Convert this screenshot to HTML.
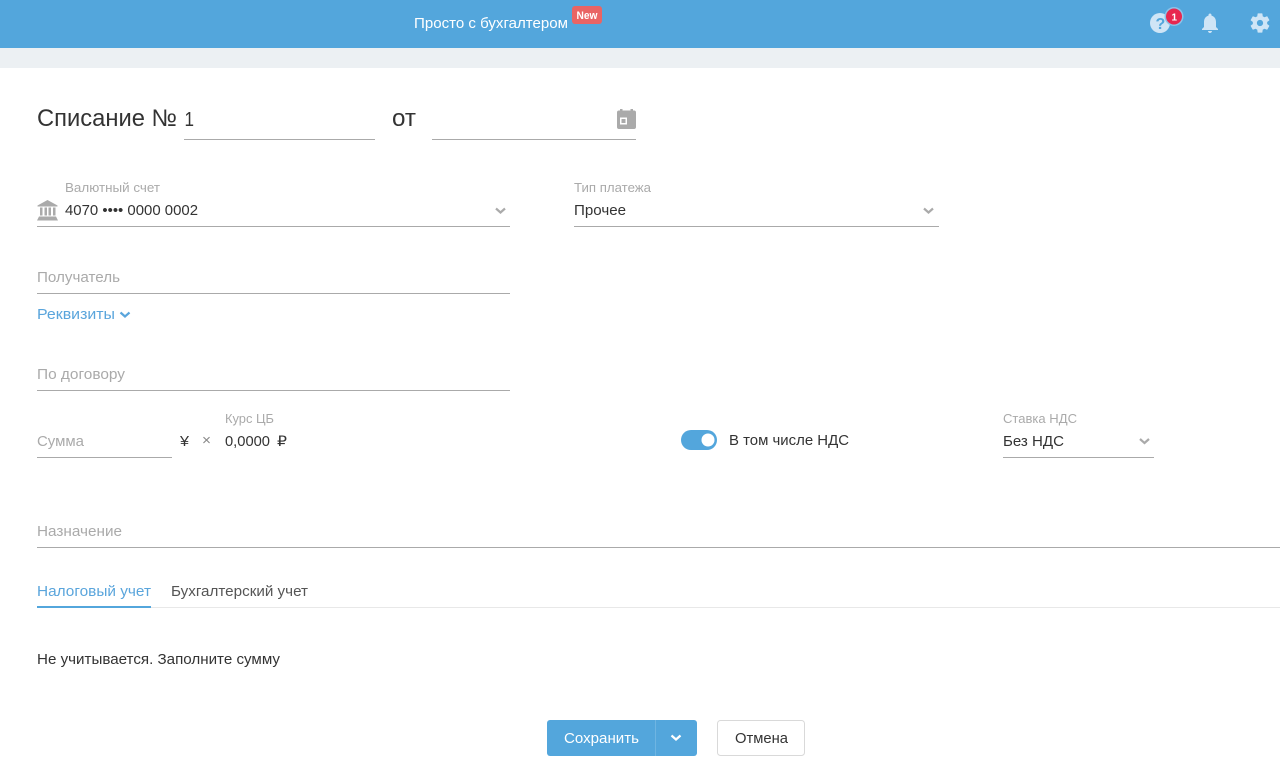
<!DOCTYPE html>
<html lang="ru"><head><meta charset="utf-8"><title>Списание</title>
<style>
html,body{margin:0;padding:0;background:#fff;width:1280px;height:764px;overflow:hidden}
svg{display:block}
text{font-family:"Liberation Sans",sans-serif;font-size:15px;fill:#333;}
.l{font-size:12.5px;fill:#aaa}
.p{fill:#aaa}
.v{fill:#333}
</style></head><body>
<svg width="1280" height="764" viewBox="0 0 1280 764" xmlns="http://www.w3.org/2000/svg">
<rect width="1280" height="48" fill="#53a6dc"/>
<rect y="48" width="1280" height="20" fill="#ecf0f3"/>
<text x="414" y="28" style="fill:#fff" textLength="154" lengthAdjust="spacingAndGlyphs">Просто с бухгалтером</text>
<rect x="572" y="6" width="30" height="18" rx="3" fill="#e96464"/>
<text x="576.500" y="19" style="fill:#fff;font-size:11px;font-weight:bold" textLength="21" lengthAdjust="spacingAndGlyphs">New</text>

<circle cx="1160" cy="23" r="10" fill="#cfe5f6"/>
<text x="1155.500" y="29" style="fill:#53a6dc;font-size:16px;font-weight:bold">?</text>
<circle cx="1174" cy="16.500" r="9.500" fill="#8cc3e8"/>
<circle cx="1174" cy="16.500" r="8" fill="#e8274f"/>
<text x="1171.500" y="20.500" style="fill:#fff;font-size:10px;font-weight:bold">1</text>
<path transform="translate(1198 11)" fill="#cfe5f6" d="M12 22c1.100 0 2-.9 2-2h-4c0 1.100.9 2 2 2zm6-6v-5c0-3.070-1.630-5.640-4.500-6.320V4c0-.83-.67-1.500-1.500-1.500s-1.500.67-1.500 1.500v.68C7.640 5.360 6 7.920 6 11v5l-2 2v1h16v-1l-2-2z"/>
<path transform="translate(1248 11)" fill="#cfe5f6" d="M19.140 12.940c.04-.3.06-.61.06-.94 0-.32-.02-.64-.07-.94l2.030-1.580c.18-.14.23-.41.12-.61l-1.920-3.320c-.12-.22-.37-.29-.59-.22l-2.390.96c-.5-.38-1.030-.7-1.620-.94l-.36-2.540c-.04-.24-.24-.41-.48-.41h-3.840c-.24 0-.43.17-.47.41l-.36 2.540c-.59.24-1.130.57-1.620.94l-2.390-.96c-.22-.08-.47 0-.59.22L2.740 8.870c-.12.21-.08.47.12.61l2.030 1.580c-.05.3-.09.63-.09.94s.02.64.07.94l-2.030 1.580c-.18.14-.23.41-.12.61l1.920 3.320c.12.22.37.29.59.22l2.390-.96c.5.38 1.030.7 1.620.94l.36 2.540c.05.24.24.41.48.41h3.840c.24 0 .44-.17.47-.41l.36-2.540c.59-.24 1.130-.56 1.620-.94l2.390.96c.22.08.47 0 .59-.22l1.920-3.320c.12-.22.07-.47-.12-.61l-2.010-1.580zM12 15.100c-1.700 0-3.100-1.400-3.100-3.100s1.400-3.100 3.100-3.100 3.100 1.400 3.100 3.100-1.400 3.100-3.100 3.100z"/>

<text x="37" y="126" style="font-size:24px" textLength="140" lengthAdjust="spacingAndGlyphs">Списание №</text>
<text x="184.500" y="126" style="font-size:20px" textLength="9.500" lengthAdjust="spacingAndGlyphs">1</text>
<text x="392" y="126" style="font-size:24px" textLength="24" lengthAdjust="spacingAndGlyphs">от</text>

<rect x="620" y="109" width="2.500" height="3" fill="#aaa"/>
<rect x="630.500" y="109" width="2.500" height="3" fill="#aaa"/>
<rect x="617" y="110.500" width="19" height="18.500" rx="2" fill="#aaa"/>
<rect x="620" y="117.500" width="7" height="7" fill="#fff"/>
<rect x="621.500" y="119" width="4" height="4" fill="#aaa"/>

<g fill="#aaa">
<rect x="184" y="139" width="191" height="1"/>
<rect x="432" y="139" width="204" height="1"/>
<rect x="37" y="226" width="473" height="1"/>
<rect x="574" y="226" width="365" height="1"/>
<rect x="37" y="293" width="473" height="1"/>
<rect x="37" y="390" width="473" height="1"/>
<rect x="37" y="457" width="135" height="1"/>
<rect x="1003" y="457" width="151" height="1"/>
<rect x="37" y="547" width="1243" height="1"/>
</g>

<path fill="#aaa" d="M47.500 200L57.500 205.500V206.500H37.500V205.500zM40 207.500h2.500v8H40zM44.500 207.500h2.500v8h-2.500zM48.500 207.500h2.500v8h-2.500zM53 207.500h2.500v8H53zM39 216.500h17L58 220.500H37z"/>
<text class="l" x="65" y="192" textLength="95" lengthAdjust="spacingAndGlyphs">Валютный счет</text>
<text x="65" y="215" textLength="133" lengthAdjust="spacingAndGlyphs">4070 •••• 0000 0002</text>
<path d="M496 208.500l4.500 4 4.500-4" fill="none" stroke="#aaa" stroke-width="2.200"/>
<text class="l" x="574" y="192" textLength="77" lengthAdjust="spacingAndGlyphs">Тип платежа</text>
<text x="574" y="215" textLength="52" lengthAdjust="spacingAndGlyphs">Прочее</text>
<path d="M924 208.500l4.500 4 4.500-4" fill="none" stroke="#aaa" stroke-width="2.200"/>

<text class="p" x="37" y="282" textLength="83" lengthAdjust="spacingAndGlyphs">Получатель</text>
<text x="37" y="319" style="fill:#5aa5dc" textLength="78" lengthAdjust="spacingAndGlyphs">Реквизиты</text>
<path d="M120.500 312.500l4.500 4 4.500-4" fill="none" stroke="#5aa5dc" stroke-width="2.200"/>
<text class="p" x="37" y="379" textLength="88" lengthAdjust="spacingAndGlyphs">По договору</text>

<text class="p" x="37" y="446" textLength="47" lengthAdjust="spacingAndGlyphs">Сумма</text>
<text x="180" y="446" textLength="9" lengthAdjust="spacingAndGlyphs">¥</text>
<text x="202" y="445" style="fill:#888" textLength="9" lengthAdjust="spacingAndGlyphs">×</text>
<text class="l" x="225" y="423" textLength="49" lengthAdjust="spacingAndGlyphs">Курс ЦБ</text>
<text x="225" y="446" textLength="45" lengthAdjust="spacingAndGlyphs">0,0000</text>
<text x="277" y="446" style="font-family:'DejaVu Sans',sans-serif;font-size:14px" textLength="10" lengthAdjust="spacingAndGlyphs">₽</text>

<rect x="681" y="430" width="36" height="20" rx="10" fill="#53a6dc"/>
<circle cx="708" cy="440" r="6.500" fill="#fff"/>
<text x="729" y="445" textLength="120" lengthAdjust="spacingAndGlyphs">В том числе НДС</text>

<text class="l" x="1003" y="423" textLength="74" lengthAdjust="spacingAndGlyphs">Ставка НДС</text>
<text x="1003" y="446" textLength="61" lengthAdjust="spacingAndGlyphs">Без НДС</text>
<path d="M1140 439l4.500 4 4.500-4" fill="none" stroke="#aaa" stroke-width="2.200"/>

<text class="p" x="37" y="536" textLength="85" lengthAdjust="spacingAndGlyphs">Назначение</text>

<rect x="37" y="607" width="1243" height="1" fill="#e8e8e8"/>
<rect x="37" y="606" width="114" height="2" fill="#53a6dc"/>
<text x="37" y="596" style="fill:#5aa5dc" textLength="114" lengthAdjust="spacingAndGlyphs">Налоговый учет</text>
<text x="171" y="596" style="fill:#555" textLength="137" lengthAdjust="spacingAndGlyphs">Бухгалтерский учет</text>

<text x="37" y="664" textLength="243" lengthAdjust="spacingAndGlyphs">Не учитывается. Заполните сумму</text>

<rect x="547" y="720" width="150" height="36" rx="3" fill="#53a6dc"/>
<rect x="655" y="720" width="1" height="36" fill="#6fb5e2"/>
<text x="564" y="743" style="fill:#fff" textLength="75" lengthAdjust="spacingAndGlyphs">Сохранить</text>
<path d="M671.500 735.500l4.500 4 4.500-4" fill="none" stroke="#fff" stroke-width="2.200"/>
<rect x="717.500" y="720.500" width="87" height="35" rx="3" fill="#fff" stroke="#d9d9d9"/>
<text x="735" y="743" textLength="53" lengthAdjust="spacingAndGlyphs">Отмена</text>
</svg>
</body></html>
